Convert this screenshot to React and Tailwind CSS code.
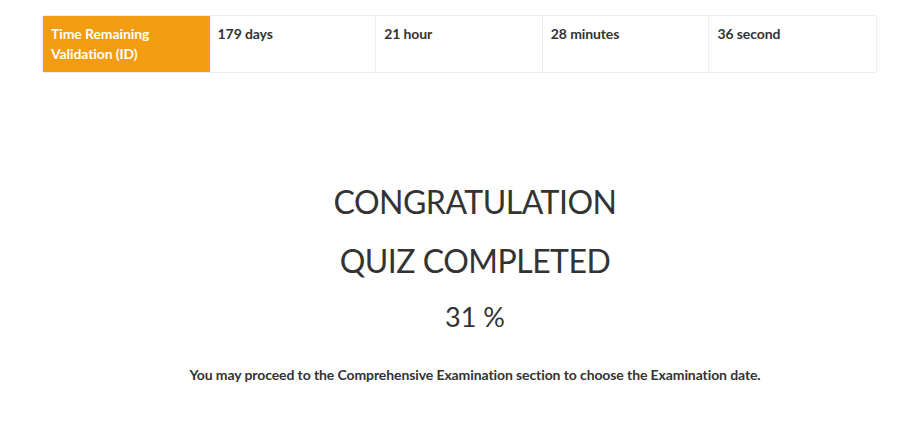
const cells = ["179 days", "21 hour", "28 minutes", "36 second"];

export default function App() {
	return (
		<div className="min-h-[444px] bg-white text-[#333] font-['Lato','Open_Sans',sans-serif]">
			<div className="pt-[15px] pl-[42px]">
				<div className="grid w-[835px] grid-cols-5 border border-[#eee] text-[14px] font-bold leading-[20px] tracking-[-0.1px]">
					<div className="h-[56px] bg-[#f39c12] px-2 pt-2 text-white">
						Time Remaining
						<br />
						Validation (ID)
					</div>
					{cells.map((c, i) => (
						<div
							key={c}
							className={
								i < cells.length - 1
									? "border-r border-[#eee] px-2 pt-2"
									: "px-2 pt-2"
							}
						>
							{c}
						</div>
					))}
				</div>
			</div>

			<div className="ml-[42px] w-[866px] pt-[99px] text-center">
				<h1 className="text-[32px] font-normal leading-[59px] tracking-[-0.5px]">CONGRATULATION</h1>
				<h1 className="text-[32px] font-normal leading-[59px] tracking-[-0.5px]">QUIZ COMPLETED</h1>
				<h2 className="-mt-[1px] text-[27px] font-normal leading-[56px]">31 %</h2>
				<p className="mt-[20px] text-[14px] font-bold leading-[20px] tracking-[-0.1px]">
					You may proceed to the Comprehensive Examination section to choose the Examination date.
				</p>
			</div>
		</div>
	);
}
